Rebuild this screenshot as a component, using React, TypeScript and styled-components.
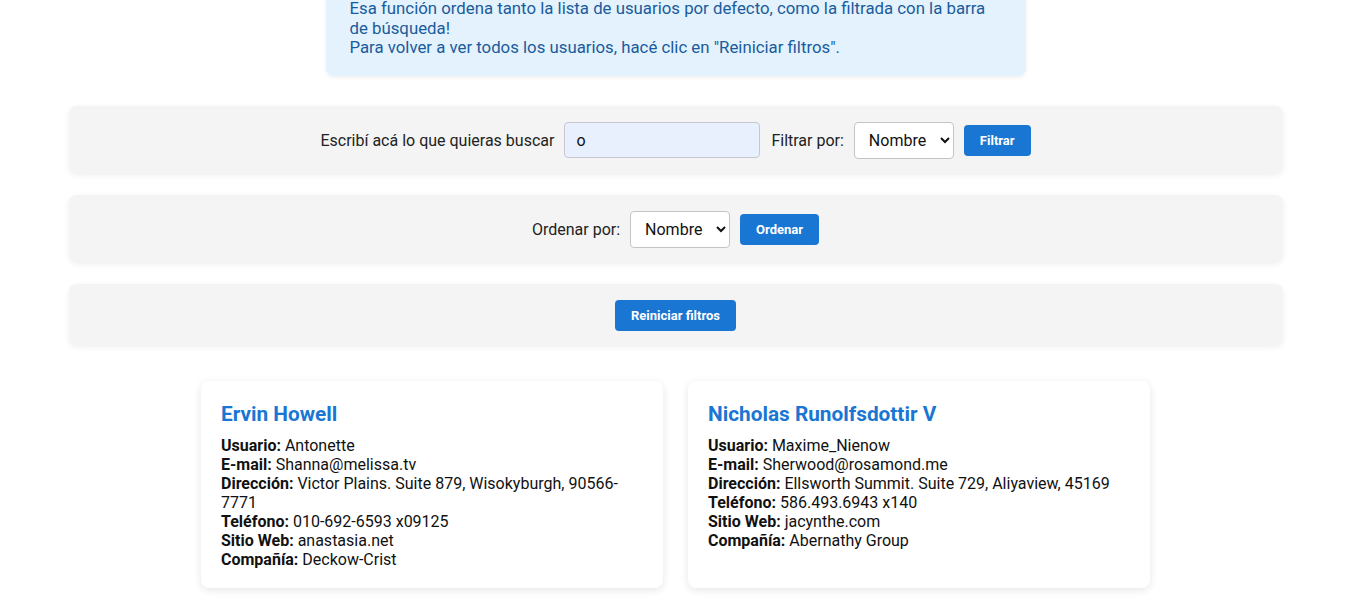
import React from "react";
import styled, { createGlobalStyle } from "styled-components";

const Global = createGlobalStyle`
  html, body { margin: 0; padding: 0; background: #ffffff; }
  body { font-family: Roboto, "Liberation Sans", Arial, sans-serif; color: #222; font-size: 16px; }
  * { box-sizing: border-box; }
`;

const Page = styled.div`
  display: flex;
  flex-direction: column;
  align-items: center;
  padding-bottom: 40px;
`;

const Info = styled.div`
  width: 700px;
  margin-top: -21px;
  padding: 20px 24px 18px;
  background: #e3f2fd;
  color: #1a5b9c;
  border-radius: 8px;
  box-shadow: 0 2px 4px rgba(0, 0, 0, 0.06);
  line-height: 19.6px;
  font-size: 16.8px;
`;

const Panels = styled.div`
  width: 1214px;
  margin-top: 30px;
  display: flex;
  flex-direction: column;
  gap: 22px;
`;

const Panel = styled.div`
  background: #f4f4f4;
  border-radius: 8px;
  box-shadow: 0 2px 6px rgba(0, 0, 0, 0.07);
  padding: 16px 15px 14px;
  display: flex;
  justify-content: center;
  align-items: center;
  gap: 10px;
`;

const Label = styled.label`
  font-size: 16px;
  color: #222;
`;

const Input = styled.input`
  width: 196px;
  height: 36px;
  border: 1px solid #c4c8ce;
  border-radius: 4px;
  background: #e8f0fe;
  font-family: inherit;
  font-size: 16px;
  padding: 0 11px;
  color: #111;
  margin-right: 1px;
`;

const Select = styled.select`
  width: 100px;
  height: 37px;
  border: 1px solid #c4c4c4;
  border-radius: 4px;
  background: #fff;
  font-family: inherit;
  font-size: 16px;
  padding: 0 4px 0 10px;
  color: #111;
`;

const Button = styled.button`
  height: 31px;
  padding: 0 16px;
  border: none;
  border-radius: 4px;
  background: #1976d2;
  color: #fff;
  font-family: inherit;
  font-weight: 700;
  font-size: 13px;
  cursor: pointer;
`;

const Cards = styled.div`
  margin-top: 36px;
  display: grid;
  grid-template-columns: 462px 462px;
  gap: 25px;
`;

const Card = styled.div`
  background: #fff;
  border-radius: 8px;
  box-shadow: 0 2px 8px rgba(0, 0, 0, 0.1);
  padding: 21px 20px 19px;
  min-height: 207px;
`;

const Name = styled.h3`
  margin: 0 0 10px;
  color: #1976d2;
  font-size: 20.8px;
  font-weight: 700;
  line-height: 24px;
`;

const Row = styled.div`
  font-size: 16px;
  line-height: 19px;
  color: #111;
  b { font-weight: 700; }
`;

const users = [
  {
    name: "Ervin Howell",
    username: "Antonette",
    email: "Shanna@melissa.tv",
    address: "Victor Plains. Suite 879, Wisokyburgh, 90566-7771",
    phone: "010-692-6593 x09125",
    website: "anastasia.net",
    company: "Deckow-Crist",
  },
  {
    name: "Nicholas Runolfsdottir V",
    username: "Maxime_Nienow",
    email: "Sherwood@rosamond.me",
    address: "Ellsworth Summit. Suite 729, Aliyaview, 45169",
    phone: "586.493.6943 x140",
    website: "jacynthe.com",
    company: "Abernathy Group",
  },
];

export default function App() {
  return (
    <>
      <Global />
      <Page>
        <Info>
          Esa función ordena tanto la lista de usuarios por defecto, como la filtrada con la barra de búsqueda!
          <br />
          Para volver a ver todos los usuarios, hacé clic en "Reiniciar filtros".
        </Info>
        <Panels>
          <Panel>
            <Label>Escribí acá lo que quieras buscar</Label>
            <Input defaultValue="o" />
            <Label>Filtrar por:</Label>
            <Select defaultValue="nombre">
              <option value="nombre">Nombre</option>
              <option value="usuario">Usuario</option>
            </Select>
            <Button>Filtrar</Button>
          </Panel>
          <Panel>
            <Label>Ordenar por:</Label>
            <Select defaultValue="nombre">
              <option value="nombre">Nombre</option>
              <option value="usuario">Usuario</option>
            </Select>
            <Button>Ordenar</Button>
          </Panel>
          <Panel>
            <Button>Reiniciar filtros</Button>
          </Panel>
        </Panels>
        <Cards>
          {users.map((u) => (
            <Card key={u.name}>
              <Name>{u.name}</Name>
              <Row><b>Usuario:</b> {u.username}</Row>
              <Row><b>E-mail:</b> {u.email}</Row>
              <Row><b>Dirección:</b> {u.address}</Row>
              <Row><b>Teléfono:</b> {u.phone}</Row>
              <Row><b>Sitio Web:</b> {u.website}</Row>
              <Row><b>Compañía:</b> {u.company}</Row>
            </Card>
          ))}
        </Cards>
      </Page>
    </>
  );
}
